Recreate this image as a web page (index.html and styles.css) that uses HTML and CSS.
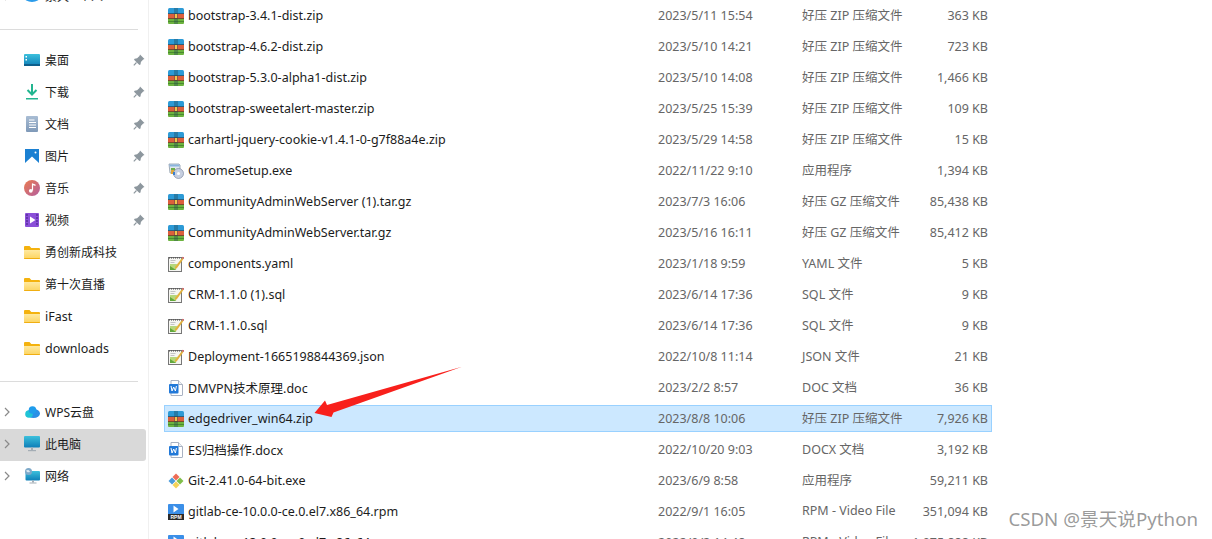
FILE: index.html
```html
<!DOCTYPE html>
<html lang="zh-CN">
<head>
<meta charset="utf-8">
<title>文件资源管理器</title>
<link rel="stylesheet" href="styles.css">
</head>
<body>
<svg class="defs" width="0" height="0" aria-hidden="true">
  <defs>
    <linearGradient id="fold" x1="0" y1="0" x2="0" y2="1"><stop offset="0" stop-color="#ffe9a0"/><stop offset="1" stop-color="#fcd45f"/></linearGradient>
    <linearGradient id="mon" x1="0" y1="0" x2="0" y2="1"><stop offset="0" stop-color="#3cc0dc"/><stop offset="1" stop-color="#0f7fb8"/></linearGradient>
    <linearGradient id="docg" x1="0" y1="0" x2="0" y2="1"><stop offset="0" stop-color="#a9bdd4"/><stop offset="1" stop-color="#7f99b8"/></linearGradient>
    <linearGradient id="mus" x1="0" y1="0" x2="1" y2="1"><stop offset="0" stop-color="#ea7b4e"/><stop offset="1" stop-color="#b45fa0"/></linearGradient>
    <symbol id="zip" viewBox="0 0 16 16">
      <path d="M0 1.500Q0 0 1.500 0h13Q16 0 16 1.500V5H0z" fill="#2c9ad6"/>
      <rect y="5" width="16" height="1" fill="#2a5f7e"/>
      <rect y="6" width="16" height="4" fill="#dc5f3c"/>
      <rect y="10" width="16" height="1" fill="#7a4a2a"/>
      <path d="M0 11h16v4q0 1-1 1H1q-1 0-1-1z" fill="#6cb33f"/>
      <rect y="13" width="16" height="1" fill="#4a8a30"/>
      <rect x="6" width="4" height="16" fill="#20424f" opacity=".35"/>
      <rect x="7" y="6" width="2" height="4" fill="#f1c64a"/>
    </symbol>
    <symbol id="exe" viewBox="0 0 16 16">
      <path d="M1 1h10l1 1v8H2z" fill="#dfe6ee" stroke="#8c99a8" stroke-width=".8"/>
      <rect x="1.500" y="1.500" width="10" height="2" fill="#8ab4dd"/>
      <rect x="3" y="5" width="4" height="5" fill="#6cae4a"/>
      <circle cx="10.500" cy="10.500" r="5" fill="#c6cfe0" stroke="#7f8ba3" stroke-width=".7"/>
      <circle cx="10.500" cy="10.500" r="1.500" fill="#fff"/>
      <path d="M3 7h3v4H3z" fill="#e0a73a"/>
      <path d="M5 9h2v3H5z" fill="#3a7fd0"/>
    </symbol>
    <symbol id="note" viewBox="0 0 16 16">
      <rect x=".5" y="1.500" width="13" height="14" fill="#f6f6f2" stroke="#777"/>
      <path d="M1 2h12" stroke="#444" stroke-width="1.200" stroke-dasharray="1 1"/>
      <path d="M2.500 4.500h5M2.500 6.500h4" stroke="#c4c4c4" stroke-width="1"/>
      <path d="M2 8h7l-1 6H2z" fill="#b6d77a"/>
      <path d="M2 14 2 10 8 14z" fill="#62a83c"/>
      <path d="M7 11 14 2l1.400 1L9 12l-2 1z" fill="#e2b23c"/>
      <path d="M14 2l.8-1.200 1.200.9-.6 1.300z" fill="#b0242a"/>
    </symbol>
    <symbol id="doc" viewBox="0 0 16 16">
      <path d="M3 .5h7.500l4 4V15a.5.5 0 0 1-.5.5H3z" fill="#fff" stroke="#a9b2c2"/>
      <path d="M10.500.5v4h4" fill="#eef1f6" stroke="#a9b2c2"/>
      <rect x="1" y="4" width="9.500" height="9.500" rx="1" fill="#2279d8"/>
      <path d="M3 6l1 5 1.700-4 1.700 4 1-5" fill="none" stroke="#fff" stroke-width="1"/>
    </symbol>
    <symbol id="git" viewBox="0 0 16 16">
      <path d="M8 .5 11.500 4 8 7.500 4.500 4z" fill="#ee6d56"/>
      <path d="M12 4.500 15.500 8 12 11.500 8.500 8z" fill="#80bf4a"/>
      <path d="M8 8.500 11.500 12 8 15.500 4.500 12z" fill="#f4d35a"/>
      <path d="M4 4.500 7.500 8 4 11.500 .5 8z" fill="#4a9bdc"/>
    </symbol>
    <symbol id="rpm" viewBox="0 0 16 16">
      <path d="M0 1q0-1 1-1h14q1 0 1 1v9H0z" fill="#3b8fe8"/>
      <path d="M5.500 1.500l5 3.500-5 3.500z" fill="#fff"/>
      <rect y="10" width="16" height="6" fill="#2a2a2a"/>
      <text x="8" y="15.200" text-anchor="middle" class="rpm-label">RPM</text>
    </symbol>
    <symbol id="folder" viewBox="0 0 16 13">
      <path d="M0 1q0-1 1-1h4.500l1.800 2H15q1 0 1 1v9q0 1-1 1H1q-1 0-1-1z" fill="#f4b20e"/>
      <path d="M0 4h16v8q0 1-1 1H1q-1 0-1-1z" fill="url(#fold)"/>
      <path d="M0 12h16q0 1-1 1H1q-1 0-1-1z" fill="#f0ae12"/>
    </symbol>
    <symbol id="pin" viewBox="0 0 12 12">
      <path d="M7 0.500l4.500 4.500-1.300.6-2.300 2.400-.4 2.500-1.100.5L1 5.700l.6-1 2.500-.5L6.500 1.900z" fill="#8d979e"/>
      <path d="M3.500 8.500.8 11.300" stroke="#8d979e" stroke-width="1.100"/>
    </symbol>
    <symbol id="chev" viewBox="0 0 6 10">
      <path d="M1 1l4 4-4 4" fill="none" stroke="#8a8a8a" stroke-width="1.200"/>
    </symbol>
  </defs>
</svg>

<div class="window">
  <nav class="side">
    <div class="nav-row"><svg class="chev"><use href="#chev"/></svg><svg class="nav-ico" viewBox="0 0 16 16"><ellipse cx="8" cy="9" rx="8" ry="5" fill="#2b9bea"/></svg><span class="label cjk">景天 - 个人</span></div>
    <div class="sep sep-a"></div>
    <div class="nav-row pad">
      <svg class="nav-ico" viewBox="0 0 16 16"><rect y="2" width="16" height="12" rx="1" fill="url(#mon)"/><rect x="1.500" y="4" width="1.500" height="1.500" fill="#fff"/><rect x="1.500" y="7" width="1.500" height="1.500" fill="#fff"/><rect y="12" width="16" height="2" fill="#0d5f8c"/></svg>
      <span class="label cjk">桌面</span><svg class="pin"><use href="#pin"/></svg></div>
    <div class="nav-row pad">
      <svg class="nav-ico" viewBox="0 0 16 16"><path d="M8 0v10M3.500 6 8 10.500 12.500 6" fill="none" stroke="#22b58f" stroke-width="2"/><rect x="2" y="14" width="12" height="1.500" fill="#22b58f"/></svg>
      <span class="label cjk">下载</span><svg class="pin"><use href="#pin"/></svg></div>
    <div class="nav-row pad">
      <svg class="nav-ico" viewBox="0 0 16 16"><rect x="2" y="0" width="12" height="16" rx="1" fill="url(#docg)"/><path d="M5 4h5.500M5 6.500h7M5 9h7M5 11.500h7" stroke="#fff" stroke-width="1"/></svg>
      <span class="label cjk">文档</span><svg class="pin"><use href="#pin"/></svg></div>
    <div class="nav-row pad">
      <svg class="nav-ico" viewBox="0 0 16 16"><rect x="1" y="1" width="14" height="14" fill="#1b80d2"/><path d="M1 15l7-6.500L15 15z" fill="#fff"/><circle cx="11.500" cy="4.500" r="1" fill="#fff"/></svg>
      <span class="label cjk">图片</span><svg class="pin"><use href="#pin"/></svg></div>
    <div class="nav-row pad">
      <svg class="nav-ico" viewBox="0 0 16 16"><circle cx="8" cy="8" r="8" fill="url(#mus)"/><path d="M8.500 3.500v7" stroke="#fff" stroke-width="1.200"/><path d="M8.500 3.500l3 1v1.500l-3-1z" fill="#fff"/><circle cx="6.800" cy="10.800" r="1.900" fill="#fff"/></svg>
      <span class="label cjk">音乐</span><svg class="pin"><use href="#pin"/></svg></div>
    <div class="nav-row pad">
      <svg class="nav-ico" viewBox="0 0 16 16"><rect x="1" y="1" width="14" height="14" rx="1" fill="#8a4fd8"/><path d="M6 4.500v7l5.500-3.500z" fill="#fff"/><path d="M2 3h2M2 6h2M2 9h2M2 12h2M12 3h2M12 6h2M12 9h2M12 12h2" stroke="#3f1f80" stroke-width="1.200"/></svg>
      <span class="label cjk">视频</span><svg class="pin"><use href="#pin"/></svg></div>
    <div class="nav-row pad"><svg class="nav-ico folder"><use href="#folder"/></svg><span class="label cjk">勇创新成科技</span></div>
    <div class="nav-row pad"><svg class="nav-ico folder"><use href="#folder"/></svg><span class="label cjk">第十次直播</span></div>
    <div class="nav-row pad"><svg class="nav-ico folder"><use href="#folder"/></svg><span class="label">iFast</span></div>
    <div class="nav-row pad"><svg class="nav-ico folder"><use href="#folder"/></svg><span class="label">downloads</span></div>
    <div class="sep sep-b"></div>
    <div class="nav-row drive"><svg class="chev"><use href="#chev"/></svg>
      <svg class="nav-ico" viewBox="0 0 16 16"><ellipse cx="9.500" cy="9.500" rx="6.500" ry="4.500" fill="#2a8fe6"/><circle cx="5" cy="10" r="3.800" fill="#1fc4d6"/><circle cx="8.500" cy="6" r="3.800" fill="#1f9cec"/></svg>
      <span class="label cjk">WPS云盘</span></div>
    <div class="nav-row drive active"><svg class="chev"><use href="#chev"/></svg>
      <svg class="nav-ico" viewBox="0 0 16 16"><rect y="0" width="16" height="11.500" rx="1" fill="url(#mon)"/><path d="M7 11.500h2v2.500H7z" fill="#a4adb5"/><rect x="4" y="14" width="8" height="1.200" fill="#a4adb5"/></svg>
      <span class="label cjk">此电脑</span></div>
    <div class="nav-row drive"><svg class="chev"><use href="#chev"/></svg>
      <svg class="nav-ico" viewBox="0 0 16 16"><rect x="1.500" y="3" width="14.500" height="9.500" rx="1" fill="url(#mon)"/><path d="M8 12.500h2v2H8z" fill="#a4adb5"/><rect x="5.500" y="14.500" width="7" height="1" fill="#a4adb5"/><circle cx="4.500" cy="3.500" r="3.500" fill="#7ea9c9"/><path d="M2 2.500c2-1 3-.5 4 1-1 1.500-3 1-4-1z" fill="#dbe8f0"/></svg>
      <span class="label cjk">网络</span></div>
  </nav>

  <main class="list">
    <div class="row"><svg class="ico"><use href="#zip"/></svg><span class="name">bootstrap-3.4.1-dist.zip</span><span class="date">2023/5/11 15:54</span><span class="type">好压 ZIP 压缩文件</span><span class="size">363 KB</span></div>
    <div class="row"><svg class="ico"><use href="#zip"/></svg><span class="name">bootstrap-4.6.2-dist.zip</span><span class="date">2023/5/10 14:21</span><span class="type">好压 ZIP 压缩文件</span><span class="size">723 KB</span></div>
    <div class="row"><svg class="ico"><use href="#zip"/></svg><span class="name">bootstrap-5.3.0-alpha1-dist.zip</span><span class="date">2023/5/10 14:08</span><span class="type">好压 ZIP 压缩文件</span><span class="size">1,466 KB</span></div>
    <div class="row"><svg class="ico"><use href="#zip"/></svg><span class="name">bootstrap-sweetalert-master.zip</span><span class="date">2023/5/25 15:39</span><span class="type">好压 ZIP 压缩文件</span><span class="size">109 KB</span></div>
    <div class="row"><svg class="ico"><use href="#zip"/></svg><span class="name">carhartl-jquery-cookie-v1.4.1-0-g7f88a4e.zip</span><span class="date">2023/5/29 14:58</span><span class="type">好压 ZIP 压缩文件</span><span class="size">15 KB</span></div>
    <div class="row"><svg class="ico"><use href="#exe"/></svg><span class="name">ChromeSetup.exe</span><span class="date">2022/11/22 9:10</span><span class="type">应用程序</span><span class="size">1,394 KB</span></div>
    <div class="row"><svg class="ico"><use href="#zip"/></svg><span class="name">CommunityAdminWebServer (1).tar.gz</span><span class="date">2023/7/3 16:06</span><span class="type">好压 GZ 压缩文件</span><span class="size">85,438 KB</span></div>
    <div class="row"><svg class="ico"><use href="#zip"/></svg><span class="name">CommunityAdminWebServer.tar.gz</span><span class="date">2023/5/16 16:11</span><span class="type">好压 GZ 压缩文件</span><span class="size">85,412 KB</span></div>
    <div class="row"><svg class="ico"><use href="#note"/></svg><span class="name">components.yaml</span><span class="date">2023/1/18 9:59</span><span class="type">YAML 文件</span><span class="size">5 KB</span></div>
    <div class="row"><svg class="ico"><use href="#note"/></svg><span class="name">CRM-1.1.0 (1).sql</span><span class="date">2023/6/14 17:36</span><span class="type">SQL 文件</span><span class="size">9 KB</span></div>
    <div class="row"><svg class="ico"><use href="#note"/></svg><span class="name">CRM-1.1.0.sql</span><span class="date">2023/6/14 17:36</span><span class="type">SQL 文件</span><span class="size">9 KB</span></div>
    <div class="row"><svg class="ico"><use href="#note"/></svg><span class="name">Deployment-1665198844369.json</span><span class="date">2022/10/8 11:14</span><span class="type">JSON 文件</span><span class="size">21 KB</span></div>
    <div class="row"><svg class="ico"><use href="#doc"/></svg><span class="name">DMVPN技术原理.doc</span><span class="date">2023/2/2 8:57</span><span class="type">DOC 文档</span><span class="size">36 KB</span></div>
    <div class="row selected"><svg class="ico"><use href="#zip"/></svg><span class="name">edgedriver_win64.zip</span><span class="date">2023/8/8 10:06</span><span class="type">好压 ZIP 压缩文件</span><span class="size">7,926 KB</span></div>
    <div class="row"><svg class="ico"><use href="#doc"/></svg><span class="name">ES归档操作.docx</span><span class="date">2022/10/20 9:03</span><span class="type">DOCX 文档</span><span class="size">3,192 KB</span></div>
    <div class="row"><svg class="ico"><use href="#git"/></svg><span class="name">Git-2.41.0-64-bit.exe</span><span class="date">2023/6/9 8:58</span><span class="type">应用程序</span><span class="size">59,211 KB</span></div>
    <div class="row"><svg class="ico"><use href="#rpm"/></svg><span class="name">gitlab-ce-10.0.0-ce.0.el7.x86_64.rpm</span><span class="date">2022/9/1 16:05</span><span class="type">RPM - Video File</span><span class="size">351,094 KB</span></div>
    <div class="row"><svg class="ico"><use href="#rpm"/></svg><span class="name">gitlab-ce-13.0.0-ce.0.el7.x86_64.rpm</span><span class="date">2022/9/2 14:48</span><span class="type">RPM - Video File</span><span class="size">1,075,888 KB</span></div>
  </main>
</div>

<svg class="arrow" viewBox="0 0 155 60" width="155" height="60" aria-hidden="true">
  <path d="M4.500 51 15 38.500 17 43 152 4.700 23.500 50.500 21.500 55z" fill="#f8201c"/>
</svg>
<div class="watermark">CSDN @景天说Python</div>
</body>
</html>
```

FILE: styles.css
```css
html, body {
  margin: 0;
  padding: 0;
  height: 539px;
  overflow: hidden;
  background: #fff;
}

body {
  position: relative;
  font-family: "Noto Sans", "Noto Sans CJK SC", sans-serif;
  font-size: 12.5px;
  color: #1c1c1c;
}

.defs {
  position: absolute;
}

.rpm-label {
  font-family: "Liberation Sans", sans-serif;
  font-size: 5px;
  font-weight: 700;
  fill: #fff;
}

.window {
  display: flex;
  align-items: flex-start;
  height: 539px;
}

.side {
  flex: 0 0 149px;
  box-sizing: border-box;
  height: 600px;
  margin-top: -20px;
  border-right: 1px solid #f0f0f0;
}

.nav-row {
  display: flex;
  align-items: center;
  box-sizing: border-box;
  height: 32px;
  padding-left: 4px;
}

.nav-row.pad {
  padding-left: 24px;
}

.nav-row.drive {
  padding-bottom: 2px;
}

.nav-row.active {
  background: #d9d9d9;
  border-radius: 0 3px 3px 0;
  width: 146px;
}

.sep {
  height: 1px;
  width: 138px;
  background: #dcdcdc;
}

.sep-a {
  margin: 17px 0 14px;
}

.sep-b {
  margin: 17px 0 15px;
}

.chev {
  flex: none;
  width: 6px;
  height: 10px;
  margin-right: 14px;
}

.nav-ico {
  flex: none;
  width: 16px;
  height: 16px;
  margin-right: 5px;
}

.nav-ico.folder {
  height: 13px;
}

.label {
  flex: 1;
  white-space: nowrap;
}

.label.cjk {
  font-size: 12px;
}

.pin {
  flex: none;
  width: 12px;
  height: 12px;
  margin-right: 3px;
}

.list {
  flex: none;
  display: flex;
  flex-direction: column;
  gap: 4px;
  width: 828px;
  margin-left: 15px;
  padding-top: 2px;
}

.row {
  display: grid;
  grid-template-columns: 20px 470px 144px 102px 1fr;
  align-items: center;
  flex: none;
  box-sizing: border-box;
  height: 27px;
  padding: 0 4px;
  border: 1px solid transparent;
  border-width: 1px 0 1px 0;
  white-space: nowrap;
}

.row.selected {
  background: #cce8ff;
  border: 1px solid #99d1ff;
  padding: 0 3px;
}

.ico {
  width: 16px;
  height: 16px;
}

.date,
.type,
.size {
  color: #666;
}

.type {
  margin-bottom: 2px;
}

.size {
  text-align: right;
}

.arrow {
  position: absolute;
  left: 310px;
  top: 362px;
}

.watermark {
  position: absolute;
  right: 14px;
  top: 504px;
  font-size: 18.7px;
  color: rgba(110, 110, 110, 0.7);
  white-space: nowrap;
}
```
